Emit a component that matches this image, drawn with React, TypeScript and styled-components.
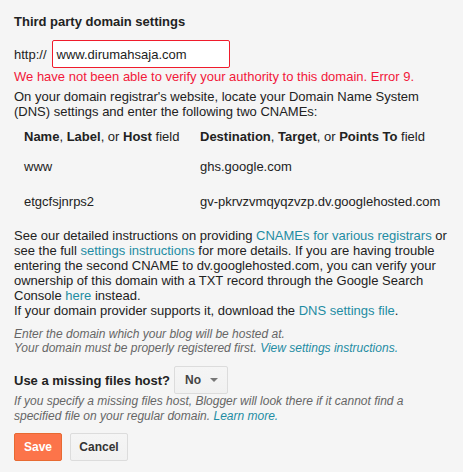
import React from "react";
import styled, { createGlobalStyle } from "styled-components";

const Global = createGlobalStyle`
  html, body { margin: 0; padding: 0; background: #f5f5f5; }
  body { font-family: "Liberation Sans", Arial, sans-serif; font-size: 13px; color: #222; }
`;

const Page = styled.div`
  padding: 14px 14px 0 14px;
  width: 463px;
  box-sizing: border-box;
`;

const Heading = styled.h2`
  margin: 0;
  font-size: 13px;
  font-weight: bold;
  line-height: 16px;
  color: #222;
`;

const UrlRow = styled.div`
  display: flex;
  align-items: center;
  gap: 5px;
  margin-top: 10px;
`;

const UrlInput = styled.div`
  width: 178px;
  height: 28px;
  box-sizing: border-box;
  border: 1px solid #f01c2c;
  border-radius: 2px;
  background: #fff;
  padding: 0 4px;
  display: flex;
  align-items: center;
  font-size: 13px;
  color: #222;
`;

const ErrorText = styled.div`
  color: #f2183a;
  line-height: 16px;
  margin-top: 1px;
`;

const Para = styled.p<{ $top: number }>`
  margin: ${(p) => p.$top}px 0 0 0;
  line-height: 15px;
`;

const Link = styled.a`
  color: #1e8ca3;
  text-decoration: none;
`;

const Table = styled.table`
  border-collapse: collapse;
  margin: 10px 0 0 10px;
  font-size: 13px;
  white-space: nowrap;
`;

const Th = styled.th<{ $w?: number }>`
  text-align: left;
  font-weight: normal;
  padding: 0;
  width: ${(p) => (p.$w ? `${p.$w}px` : "auto")};
  line-height: 16px;
`;

const Td = styled.td<{ $pt: number }>`
  padding: ${(p) => p.$pt}px 0 0 0;
  line-height: 16px;
`;

const Hint = styled.div<{ $top: number; $lh: number }>`
  margin-top: ${(p) => p.$top}px;
  font-style: italic;
  font-size: 12px;
  line-height: ${(p) => p.$lh}px;
  color: #666;
`;

const HostRow = styled.div`
  display: flex;
  align-items: center;
  gap: 4px;
  margin-top: 11px;
`;

const HostLabel = styled.span`
  font-weight: bold;
  font-size: 13px;
`;

const Select = styled.div`
  width: 54px;
  height: 28px;
  box-sizing: border-box;
  border: 1px solid #dcdcdc;
  border-radius: 2px;
  background: linear-gradient(#f5f5f5, #f1f1f1);
  display: flex;
  align-items: center;
  padding-left: 10px;
  gap: 9px;
  font-weight: bold;
  font-size: 12px;
  color: #444;
`;

const Caret = styled.span`
  width: 0;
  height: 0;
  border-left: 4px solid transparent;
  border-right: 4px solid transparent;
  border-top: 4px solid #777;
`;

const Buttons = styled.div`
  display: flex;
  gap: 8px;
  margin-top: 9px;
`;

const Button = styled.button<{ $primary?: boolean }>`
  height: 28px;
  box-sizing: border-box;
  padding: 0;
  border-radius: 2px;
  font-family: "Liberation Sans", Arial, sans-serif;
  font-size: 12px;
  font-weight: bold;
  border: 1px solid ${(p) => (p.$primary ? "#e76a32" : "#dcdcdc")};
  background: ${(p) => (p.$primary ? "#fc744a" : "linear-gradient(#f5f5f5, #f1f1f1)")};
  color: ${(p) => (p.$primary ? "#fff" : "#333")};
  width: ${(p) => (p.$primary ? 48 : 58)}px;
`;

export default function App() {
  return (
    <>
      <Global />
      <Page>
        <Heading>Third party domain settings</Heading>
        <UrlRow>
          <span>http://</span>
          <UrlInput>www.dirumahsaja.com</UrlInput>
        </UrlRow>
        <ErrorText>We have not been able to verify your authority to this domain. Error 9.</ErrorText>
        <Para $top={4}>
          On your domain registrar's website, locate your Domain Name System (DNS) settings and enter the following two CNAMEs:
        </Para>
        <Table>
          <thead>
            <tr>
              <Th $w={176}>
                <b>Name</b>, <b>Label</b>, or <b>Host</b> field
              </Th>
              <Th>
                <b>Destination</b>, <b>Target</b>, or <b>Points To</b> field
              </Th>
            </tr>
          </thead>
          <tbody>
            <tr>
              <Td $pt={14}>www</Td>
              <Td $pt={14}>ghs.google.com</Td>
            </tr>
            <tr>
              <Td $pt={19}>etgcfsjnrps2</Td>
              <Td $pt={19}>gv-pkrvzvmqyqzvzp.dv.googlehosted.com</Td>
            </tr>
          </tbody>
        </Table>
        <Para $top={18}>
          See our detailed instructions on providing <Link>CNAMEs for various registrars</Link> or see the full{" "}
          <Link>settings instructions</Link> for more details. If you are having trouble entering the second CNAME to
          dv.googlehosted.com, you can verify your ownership of this domain with a TXT record through the Google Search
          Console <Link>here</Link> instead.
          <br />
          If your domain provider supports it, download the <Link>DNS settings file</Link>.
        </Para>
        <Hint $top={9} $lh={14}>
          Enter the domain which your blog will be hosted at.
          <br />
          Your domain must be properly registered first. <Link>View settings instructions.</Link>
        </Hint>
        <HostRow>
          <HostLabel>Use a missing files host?</HostLabel>
          <Select>
            No <Caret />
          </Select>
        </HostRow>
        <Hint $top={0} $lh={15}>
          If you specify a missing files host, Blogger will look there if it cannot find a specified file on your regular
          domain. <Link>Learn more.</Link>
        </Hint>
        <Buttons>
          <Button $primary>Save</Button>
          <Button>Cancel</Button>
        </Buttons>
      </Page>
    </>
  );
}
